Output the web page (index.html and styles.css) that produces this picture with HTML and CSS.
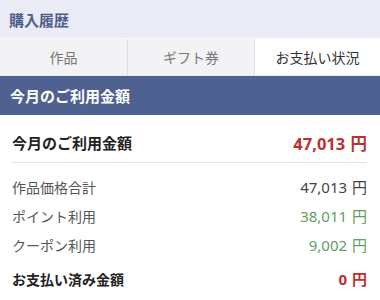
FILE: index.html
```html
<!DOCTYPE html>
<html lang="ja">
<head>
<meta charset="utf-8">
<link rel="stylesheet" href="styles.css">
</head>
<body>
<div class="page">
  <header class="header">購入履歴</header>
  <nav class="tabs">
    <div class="tab">作品</div>
    <div class="tab">ギフト券</div>
    <div class="tab active">お支払い状況</div>
  </nav>
  <div class="bar">今月のご利用金額</div>
  <section class="content">
    <div class="row-main">
      <span>今月のご利用金額</span>
      <span class="val red">47,013 円</span>
    </div>
    <div class="list">
      <div class="row"><span>作品価格合計</span><span class="val dark">47,013 円</span></div>
      <div class="row"><span>ポイント利用</span><span class="val green">38,011 円</span></div>
      <div class="row"><span>クーポン利用</span><span class="val green">9,002 円</span></div>
      <div class="row total"><span>お支払い済み金額</span><span class="val red">0 円</span></div>
    </div>
  </section>
</div>
</body>
</html>
```

FILE: styles.css
```css
* { box-sizing: border-box; }
html, body { margin: 0; padding: 0; background: #fff; }
body {
  font-family: "Noto Sans CJK JP", "Noto Sans", sans-serif;
  color: #333;
}
.page { width: 380px; }
.header {
  height: 39px;
  display: flex;
  align-items: center;
  padding-left: 9px;
  background: #e9ecf5;
  color: #4d5d8a;
  font-size: 15px;
  font-weight: 700;
  border-bottom: 1px solid #f6f7fb;
}
.tabs {
  display: grid;
  grid-template-columns: 127px 127px 1fr;
  height: 37px;
  background: #f3f3f5;
  border-bottom: 1px solid #e6e9f2;
}
.tab {
  display: flex;
  align-items: center;
  justify-content: center;
  font-size: 14px;
  color: #777;
  border-left: 1px solid #dedee2;
}
.tab:first-child { border-left: none; }
.tab.active { background: #fff; color: #333; }
.bar {
  height: 39px;
  display: flex;
  align-items: center;
  padding-left: 10px;
  background: #4f6190;
  color: #fff;
  font-size: 15px;
  font-weight: 700;
}
.content { padding: 0 13px 0 12px; }
.row-main {
  display: flex;
  justify-content: space-between;
  align-items: center;
  height: 48px;
  padding-top: 8px;
  font-size: 15px;
  font-weight: 700;
  color: #222;
  border-bottom: 1px solid #e2e2e2;
}
.list { padding-top: 9px; }
.row {
  display: flex;
  justify-content: space-between;
  align-items: center;
  height: 29px;
  font-size: 14px;
  color: #555;
}
.row.total {
  margin-top: 5px;
  font-weight: 700;
  color: #222;
}
.val {
  font-family: "Noto Sans", "Noto Sans CJK JP", sans-serif;
  font-size: 15px;
  word-spacing: 1px;
}
.row-main .val { font-size: 16.5px; }
.red { color: #b8322f; font-weight: 700; }
.green { color: #5f9e62; }
.dark { color: #444; }
```
